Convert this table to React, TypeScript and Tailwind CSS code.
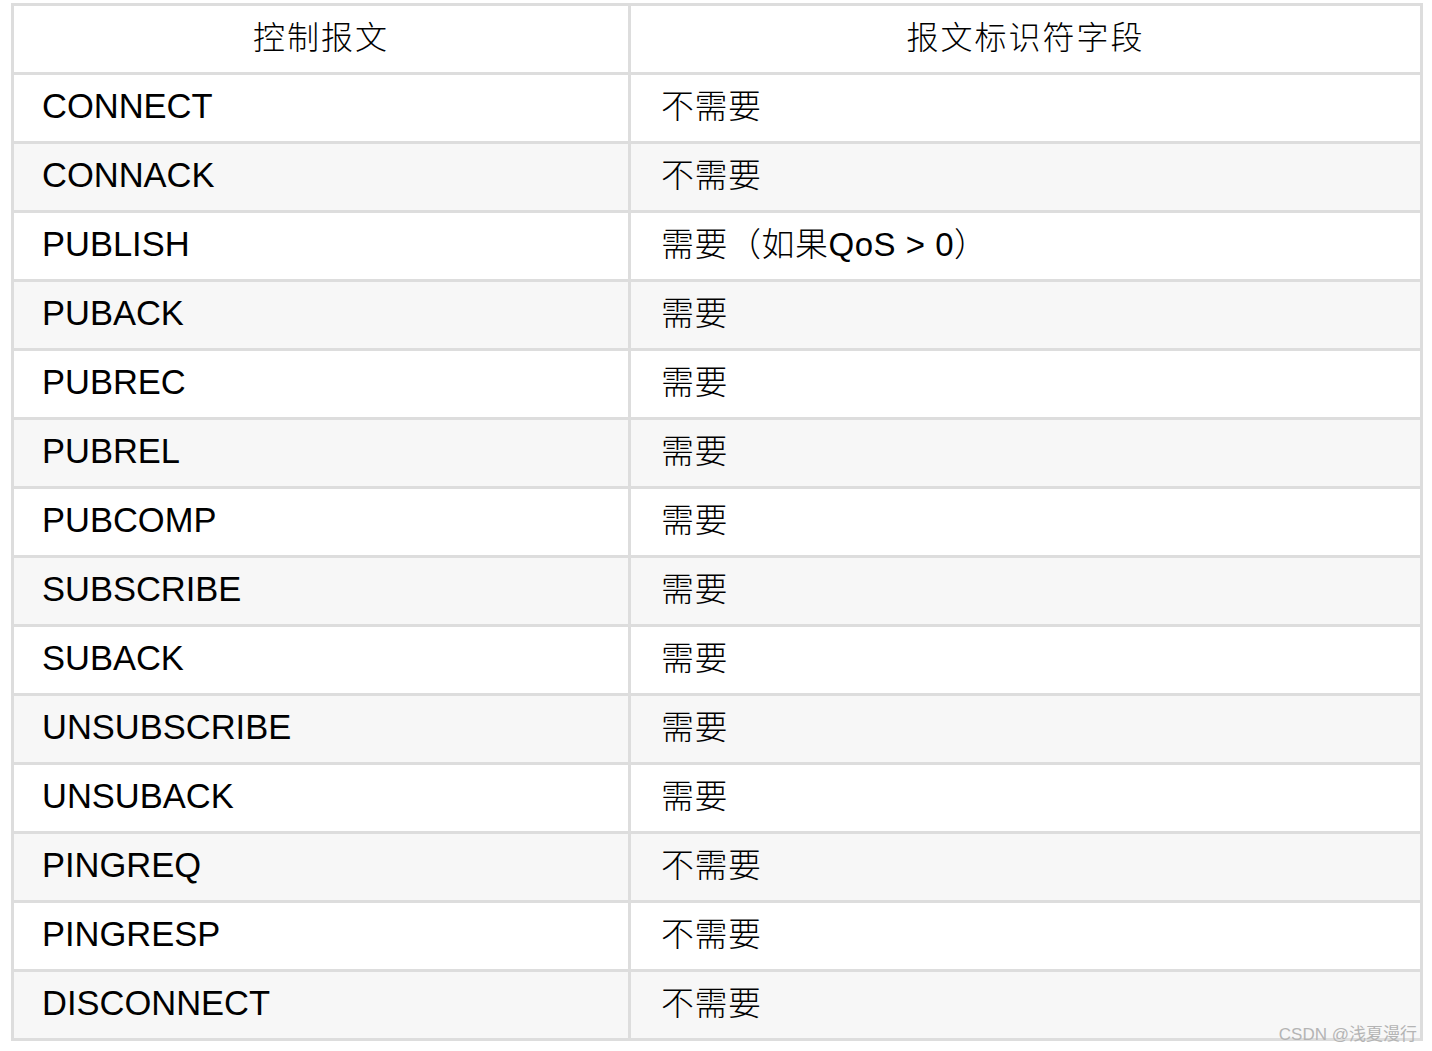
/**
 * MQTT control packet table — which packets carry a packet identifier
 */

const rows: [string, string][] = [
  ['CONNECT', '不需要'],
  ['CONNACK', '不需要'],
  ['PUBLISH', '需要（如果QoS > 0）'],
  ['PUBACK', '需要'],
  ['PUBREC', '需要'],
  ['PUBREL', '需要'],
  ['PUBCOMP', '需要'],
  ['SUBSCRIBE', '需要'],
  ['SUBACK', '需要'],
  ['UNSUBSCRIBE', '需要'],
  ['UNSUBACK', '需要'],
  ['PINGREQ', '不需要'],
  ['PINGRESP', '不需要'],
  ['DISCONNECT', '不需要'],
];

const font = { fontFamily: '"Liberation Sans", "Noto Sans CJK SC", sans-serif' };

export default function App() {
  return (
    <div className="relative w-[1432px] h-[1051px] bg-white overflow-hidden text-black" style={font}>
      <div className="ml-[11px] mt-[3px] w-[1412px] grid grid-cols-[614px_789px] auto-rows-[66px] gap-[3px] p-[3px] bg-[#dddddd]">
        <div className="bg-white flex items-center justify-center pb-[3px] text-[32px] tracking-[2px] font-light">控制报文</div>
        <div className="bg-white flex items-center justify-center pb-[3px] text-[32px] tracking-[2px] font-light">报文标识符字段</div>
        {rows.map(([name, need], i) => {
          const bg = i % 2 === 0 ? 'bg-white' : 'bg-[#f7f7f7]';
          return [
            <div key={name + 'a'} className={`${bg} flex items-center pl-[28px] pb-[2px] text-[34.5px]`}>
              {name}
            </div>,
            <div key={name + 'b'} className={`${bg} flex items-center pl-[30px] pb-[2px] text-[33px] font-light tracking-[0.5px]`}>
              {need}
            </div>,
          ];
        })}
      </div>

      {/* Watermark */}
      <div className="absolute right-[15px] bottom-[8px] text-[17px] leading-none text-[#b4b4b4]">
        CSDN @浅夏漫行
      </div>
    </div>
  );
}
